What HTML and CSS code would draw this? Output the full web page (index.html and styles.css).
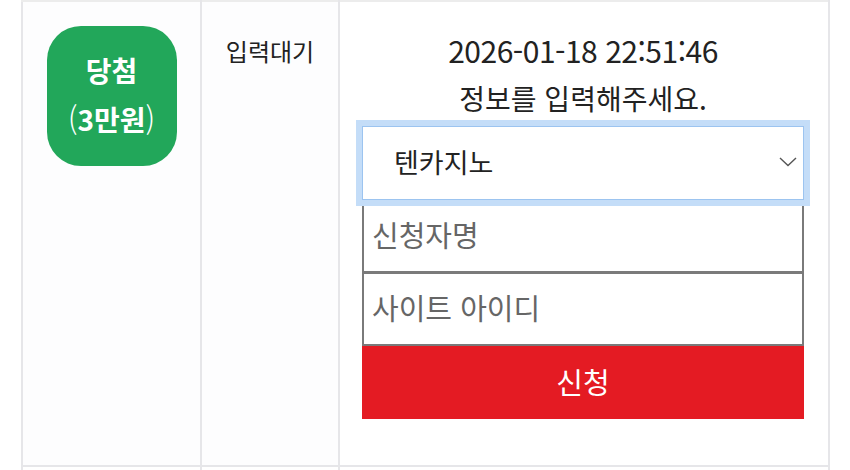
FILE: index.html
```html
<!DOCTYPE html>
<html lang="ko">
<head>
<meta charset="UTF-8">
<title>당첨 정보 입력</title>
<link rel="stylesheet" href="styles.css">
</head>
<body>
<table class="prize-table">
    <tbody>
        <tr>
            <td class="col-badge">
                <div class="badge">
                    <strong>당첨</strong>
                    <span>(<b>3만원</b>)</span>
                </div>
            </td>
            <td class="col-status">입력대기</td>
            <td class="col-form">
                <p class="date">2026-01-18 22:51:46</p>
                <p class="notice">정보를 입력해주세요.</p>
                <form class="apply-form">
                    <div class="select-wrap">
                        <select class="site-select">
                            <option>텐카지노</option>
                        </select>
                        <svg class="chevron" width="18" height="10" viewBox="0 0 18 10"><path d="M1 1 L9 8.5 L17 1" fill="none" stroke="#555" stroke-width="1.4"/></svg>
                    </div>
                    <input class="field" type="text" placeholder="신청자명">
                    <input class="field" type="text" placeholder="사이트 아이디">
                    <button class="apply-btn" type="button">신청</button>
                </form>
            </td>
        </tr>
        <tr class="next-row">
            <td></td>
            <td></td>
            <td></td>
        </tr>
    </tbody>
</table>
</body>
</html>
```

FILE: styles.css
```css
html, body {
    height: 470px;
    overflow: hidden;
}
body {
    margin: 0;
    background: #fff;
    font-family: "Noto Sans CJK KR", "Noto Sans", sans-serif;
    color: #222;
}
.prize-table {
    border-collapse: collapse;
    margin-left: 21px;
    width: 809px;
    table-layout: fixed;
}
.prize-table td {
    border: 2px solid #e6e6e9;
    vertical-align: top;
    padding: 0;
}
.prize-table tr:first-child td {
    border-top-color: #ececec;
}
.col-badge {
    width: 177px;
    height: 463px;
    background: #fdfdfe;
}
.col-status {
    width: 136px;
    text-align: center;
    font-size: 24px;
    line-height: 30px;
    padding-top: 34px !important;
    background: #fdfdfe;
}
.col-form {
    padding: 0 24px 0 22px !important;
    text-align: center;
}
.badge {
    width: 130px;
    height: 140px;
    box-sizing: border-box;
    padding-bottom: 4px;
    margin: 24px auto 0;
    background: #22a75a;
    border-radius: 34px;
    color: #fff;
    display: flex;
    flex-direction: column;
    align-items: center;
    justify-content: center;
    gap: 14px;
}
.badge strong {
    font-size: 28px;
    line-height: 34px;
    font-weight: 700;
}
.badge span {
    font-size: 31px;
    line-height: 34px;
    font-weight: 200;
}
.badge b {
    font-weight: 700;
    font-size: 28px;
}
.date {
    margin: 30px 0 0;
    font-size: 30px;
    line-height: 36px;
    letter-spacing: -0.5px;
}
.notice {
    margin: 12px 0 0;
    font-size: 28px;
    line-height: 36px;
}
.apply-form {
    margin-top: 10px;
    display: flex;
    flex-direction: column;
    text-align: left;
}
.select-wrap {
    position: relative;
}
.site-select {
    appearance: none;
    -webkit-appearance: none;
    width: 100%;
    height: 74px;
    box-sizing: border-box;
    border: 1px solid #9cc4f0;
    outline: 6px solid #c4ddf8;
    background: #fff;
    font-family: inherit;
    font-size: 27px;
    color: #222;
    padding: 0 0 4px 31px;
    border-radius: 0;
}
.chevron {
    position: absolute;
    right: 7px;
    top: 31px;
}
.field {
    height: 74px;
    box-sizing: border-box;
    border: 2px solid #7a7a7a;
    margin-top: -1px;
    font-family: inherit;
    font-size: 29px;
    padding: 0 0 4px 8px;
    color: #222;
}
.field::placeholder {
    color: #666;
}
.apply-btn {
    height: 73px;
    border: 0;
    background: #e41b23;
    color: #fff;
    font-family: inherit;
    font-size: 29px;
    padding-bottom: 4px;
}
.next-row td {
    height: 3px;
}
```
